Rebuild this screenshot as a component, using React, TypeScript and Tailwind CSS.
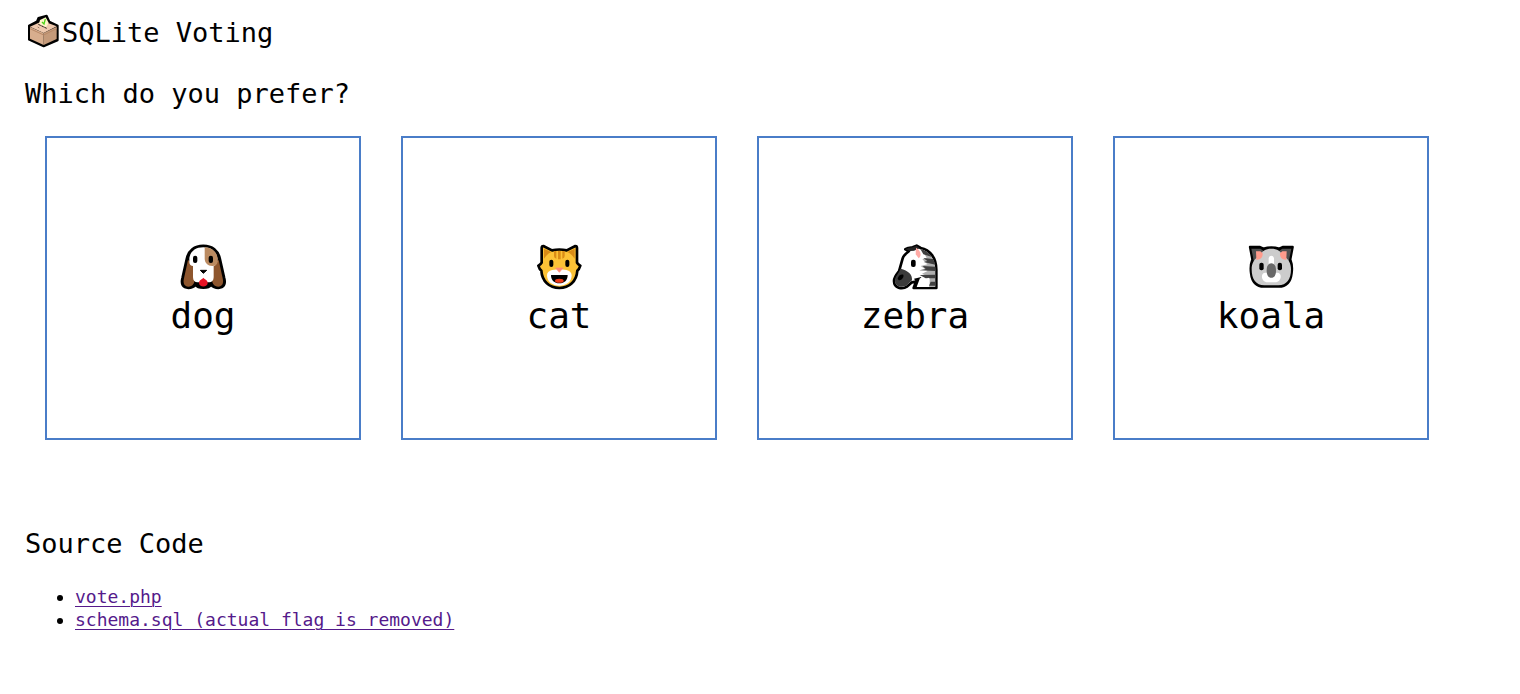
import type { ReactNode } from "react";

function BallotBoxIcon() {
  return (
    <svg viewBox="15 15 111 120" className="h-10 w-[37px] shrink-0" aria-hidden="true">
      <path d="M27 53 L51 40 L55 30 L80 23 L88 41 L113 53 V97 L71 115 L27 95 Z" fill="#000" stroke="#000" strokeWidth="6" strokeLinejoin="round" />
      <path d="M30 56 L68 39 L110 55 L71 75 Z" fill="#efc9ae" />
      <path d="M30 57 L71 75 V111 L30 92 Z" fill="#d8ae8e" />
      <path d="M110 56 L71 75 V111 L110 93 Z" fill="#c49a7a" />
      <path d="M30 62 L71 81 L110 62" fill="none" stroke="#b88968" strokeWidth="3" />
      <path d="M57 48 L60 36 L77 28 L86 44 L78 58 Z" fill="#fff6c9" />
      <path d="M66 42 L72 48 L76 33" fill="none" stroke="#4fd31d" strokeWidth="4" />
      <path d="M55 49 L80 61" stroke="#26201c" strokeWidth="3" strokeDasharray="8 2" />
      <path d="M53 57 L58 60" stroke="#6d5444" strokeWidth="2" />
    </svg>
  );
}

function DogIcon() {
  return (
    <svg viewBox="15 15 144 144" className="size-12" aria-hidden="true">
      <path d="M88 23 C61 23 43 38 38 62 L25 120 C20 140 27 150 43 150 C53 150 60 146 65 140 C72 153 104 153 111 140 C116 146 123 150 133 150 C149 150 156 140 151 120 L138 62 C133 38 115 23 88 23 Z" fill="#000" stroke="#000" strokeWidth="7" strokeLinejoin="round" />
      <path d="M42 66 L30 121 C26 137 32 146 43 146 C55 146 62 137 62 124 V82 Z" fill="#8e562e" />
      <path d="M134 66 L146 121 C150 137 144 146 133 146 C121 146 114 137 114 124 V82 Z" fill="#8e562e" />
      <path d="M88 28 C64 28 49 41 46 60 V72 C46 80 51 84 57 84 V118 C57 128 63 133 70 133 H106 C113 133 119 128 119 118 V84 C127 82 131 72 130 60 C127 41 112 28 88 28 Z" fill="#fff" />
      <path d="M92 28 C114 29 128 42 131 61 V72 C130 80 123 84 115 84 C101 84 92 75 92 61 Z" fill="#bb8b61" />
      <rect x="57" y="53" width="13" height="22" rx="6" />
      <rect x="104" y="53" width="13" height="22" rx="6" />
      <path d="M79 97 H98 L88 106 Z" stroke="#000" strokeWidth="3" strokeLinejoin="round" />
      <path d="M88 119 C93 125 101 126 101 135 C101 149 75 149 75 135 C75 126 83 125 88 119 Z" fill="#e81224" />
    </svg>
  );
}

function CatIcon() {
  return (
    <svg viewBox="15 15 144 144" className="size-12" aria-hidden="true">
      <path d="M40 24 L66 37 Q88 32 110 37 L136 24 Q141 24 141 30 V74 Q144 80 151 83 C148 93 145 96 142 98 C140 130 118 150 88 150 C58 150 36 130 34 98 C31 96 28 93 25 83 Q32 80 35 74 V30 Q35 24 40 24 Z" fill="#fcc236" stroke="#000" strokeWidth="8" strokeLinejoin="round" />
      <path d="M42 32 L64 42 Q52 47 42 62 Z" fill="#d98b16" />
      <path d="M134 32 L112 42 Q124 47 134 62 Z" fill="#d98b16" />
      <path d="M72 39 H79 V62 Q72 61 72 54 Z M84 39 H92 V64 H84 Z M97 39 H104 V54 Q104 61 97 62 Z" fill="#d98b16" />
      <path d="M88 91 C80 98 51 92 51 112 C51 132 68 143 88 143 C108 143 125 132 125 112 C125 92 96 98 88 91 Z" fill="#fff" />
      <path d="M63 111 H113 C113 127 103 136 88 136 C73 136 63 127 63 111 Z" fill="#000" />
      <ellipse cx="88" cy="128" rx="13" ry="6" fill="#f03a17" />
      <path d="M77 90 H99 L88 103 Z" fill="#ff8b77" stroke="#ff8b77" strokeWidth="2" strokeLinejoin="round" />
      <rect x="58" y="65" width="12" height="22" rx="6" />
      <rect x="106" y="65" width="12" height="22" rx="6" />
    </svg>
  );
}

function ZebraIcon() {
  return (
    <svg viewBox="15 15 144 144" className="size-12" aria-hidden="true">
      <path d="M58 34 L67 30 L80 28 L92 23 L104 30 C132 35 151 60 151 96 V150 H83 L90 131 L78 133 L64 145 C48 156 24 150 24 129 C24 118 31 110 39 100 L50 61 C53 51 62 45 69 39 Z" fill="#fff" stroke="#000" strokeWidth="8" strokeLinejoin="round" />
      <path d="M44 92 C38 105 27 116 27 128 C27 146 48 151 62 142 L78 127 C80 108 66 98 44 92 Z" fill="#3b3b3b" />
      <path d="M58 34 L67 30 L80 28 L92 23 L101 31 L84 38 L72 39 Z" fill="#222" />
      <path d="M108 35 C132 42 148 66 148 96 V147 H131 V118 L108 107 L125 99 L104 84 L124 79 L109 64 L122 60 Z" fill="#b0b0b0" />
      <path d="M103 33 C118 36 130 44 138 57 L112 49 Z M141 63 Q147 73 148 80 L113 72 L124 69 L112 60 Z M148 86 V99 L100 97 L119 93 L110 84 Z M148 110 V121 H119 L101 111 Z M148 131 V143 H129 L134 131 Z" fill="#404040" />
      <path d="M90 29 C103 36 109 52 98 61 L89 49 Z" fill="#ffaaa5" />
      <path d="M35 122 C37 113 44 108 52 110 C55 119 45 127 38 127 Z" fill="#000" />
      <path d="M84 122 L106 117 L94 147 H84 L90 131 Z" fill="#000" />
      <path d="M102 120 Q116 126 129 119 V147 H92 Z" fill="#fff" />
      <rect x="75" y="65" width="14" height="22" rx="6" />
    </svg>
  );
}

function KoalaIcon() {
  return (
    <svg viewBox="15 15 144 144" className="size-12" aria-hidden="true">
      <path d="M24 27 H54 L64 32 Q88 24 112 32 L122 27 H152 L145 64 C151 79 151 92 149 106 C146 132 132 146 110 146 H66 C44 146 30 132 27 106 C25 92 25 79 31 64 Z" fill="#000" stroke="#000" strokeWidth="7" strokeLinejoin="round" />
      <path d="M28 32 H55 L66 40 L36 72 Z M148 32 H121 L110 40 L140 72 Z" fill="#505050" />
      <path d="M88 32 C70 32 60 38 54 54 C36 60 29 78 29 94 C29 124 42 142 67 142 H109 C134 142 147 124 147 94 C147 78 140 60 122 54 C116 38 106 32 88 32 Z" fill="#ccc" />
      <path d="M42 40 H55 L62 46 C63 58 56 66 43 65 Z M134 40 H121 L114 46 C113 58 120 66 133 65 Z" fill="#ff9b8c" />
      <path d="M80 60 Q82 53 88 53 Q94 53 96 60 V88 H80 Z M70 104 H106 C122 104 119 133 99 133 H77 C57 133 54 104 70 104 Z" fill="#fff" />
      <path d="M88 76 C79 76 74 85 74 98 C74 111 79 119 88 119 C97 119 102 111 102 98 C102 85 97 76 88 76 Z" fill="#686868" />
      <rect x="52" y="74" width="13" height="23" rx="6" />
      <rect x="107" y="74" width="13" height="23" rx="6" />
    </svg>
  );
}

const choices: { name: string; icon: ReactNode }[] = [
  { name: "dog", icon: <DogIcon /> },
  { name: "cat", icon: <CatIcon /> },
  { name: "zebra", icon: <ZebraIcon /> },
  { name: "koala", icon: <KoalaIcon /> },
];

export default function App() {
  return (
    <main className="min-h-screen bg-white px-[25px] pt-[13px] pb-8 font-['DejaVu_Sans_Mono',monospace] text-[18px] leading-[23px] text-black">
      <h1 className="flex items-center text-[27px] leading-[36px]">
        <BallotBoxIcon />
        SQLite Voting
      </h1>
      <h2 className="mt-[23px] text-[27px] leading-[36px]">Which do you prefer?</h2>
      <div className="mt-6 flex flex-wrap gap-10 px-5">
        {choices.map((choice) => (
          <button
            key={choice.name}
            type="button"
            className="flex h-[304px] w-[316px] cursor-pointer flex-col items-center justify-center gap-1 border-2 border-[#4a7dc8] pt-1 text-[36px] leading-[42px]"
          >
            {choice.icon}
            {choice.name}
          </button>
        ))}
      </div>
      <h2 className="mt-[86px] text-[27px] leading-[36px]">Source Code</h2>
      <ul className="mt-[23px] list-disc pl-[50px]">
        <li>
          <a href="#vote" className="text-[#551a8b] underline decoration-1 underline-offset-3">vote.php</a>
        </li>
        <li>
          <a href="#schema" className="text-[#551a8b] underline decoration-1 underline-offset-3">schema.sql (actual flag is removed)</a>
        </li>
      </ul>
    </main>
  );
}
